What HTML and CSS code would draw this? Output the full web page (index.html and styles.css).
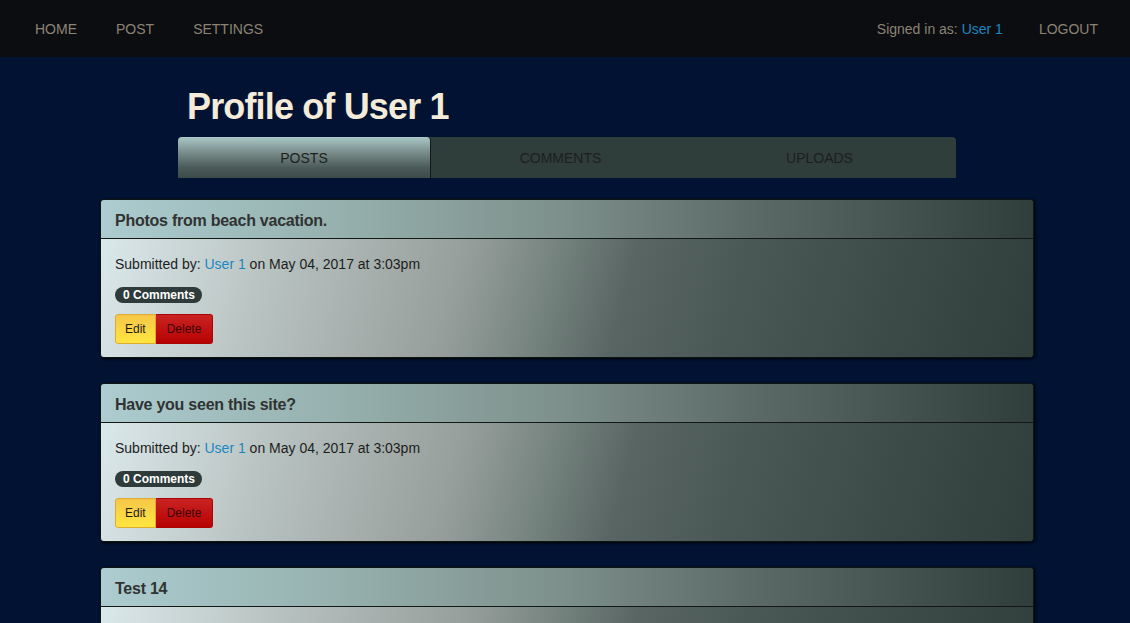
FILE: index.html
```html
<!DOCTYPE html>
<html>
<head>
<meta charset="utf-8">
<link rel="stylesheet" href="styles.css">
</head>
<body>
<nav class="navbar">
  <ul class="nav-left">
    <li><a href="#">HOME</a></li>
    <li><a href="#">POST</a></li>
    <li><a href="#">SETTINGS</a></li>
  </ul>
  <ul class="nav-right">
    <li class="signed">Signed in as: <a href="#" class="user-link">User 1</a></li>
    <li><a href="#">LOGOUT</a></li>
  </ul>
</nav>

<main class="page">
  <header class="profile-head">
    <h1 class="title">Profile of User 1</h1>
    <div class="tabs">
      <a href="#" class="tab active">POSTS</a>
      <a href="#" class="tab">COMMENTS</a>
      <a href="#" class="tab">UPLOADS</a>
    </div>
  </header>

  <section class="posts">
    <article class="panel">
      <div class="panel-heading">Photos from beach vacation.</div>
      <div class="panel-body">
        <p class="meta">Submitted by: <a href="#" class="user-link">User 1</a> on May 04, 2017 at 3:03pm</p>
        <div class="badge-row"><span class="badge">0 Comments</span></div>
        <div class="btn-group">
          <a href="#" class="btn btn-edit">Edit</a><a href="#" class="btn btn-delete">Delete</a>
        </div>
      </div>
    </article>

    <article class="panel">
      <div class="panel-heading">Have you seen this site?</div>
      <div class="panel-body">
        <p class="meta">Submitted by: <a href="#" class="user-link">User 1</a> on May 04, 2017 at 3:03pm</p>
        <div class="badge-row"><span class="badge">0 Comments</span></div>
        <div class="btn-group">
          <a href="#" class="btn btn-edit">Edit</a><a href="#" class="btn btn-delete">Delete</a>
        </div>
      </div>
    </article>

    <article class="panel">
      <div class="panel-heading">Test 14</div>
      <div class="panel-body">
        <p class="meta">Submitted by: <a href="#" class="user-link">User 1</a> on May 04, 2017 at 3:03pm</p>
        <div class="badge-row"><span class="badge">0 Comments</span></div>
        <div class="btn-group">
          <a href="#" class="btn btn-edit">Edit</a><a href="#" class="btn btn-delete">Delete</a>
        </div>
      </div>
    </article>
  </section>
</main>
</body>
</html>
```

FILE: styles.css
```css
* { box-sizing: border-box; }

html, body {
  margin: 0;
  padding: 0;
}

body {
  background: #011232;
  font-family: "Liberation Sans", Arial, Helvetica, sans-serif;
  font-size: 14px;
  line-height: 20px;
  color: #222;
  overflow: hidden;
}

a { text-decoration: none; }

.navbar {
  height: 57px;
  background: #0c0d11;
  display: flex;
  justify-content: space-between;
  align-items: center;
  padding: 0 12px 0 15px;
}

.nav-left, .nav-right {
  list-style: none;
  margin: 0;
  padding: 0;
  display: flex;
  align-items: center;
}

.nav-left li a {
  display: block;
  padding: 0 19px 0 20px;
  color: #8b8474;
  font-size: 14px;
  line-height: 18px;
}

.nav-right li a {
  color: #8b8474;
}

.nav-right li:last-child a {
  display: block;
  padding: 0 20px 0 36px;
}

.signed {
  color: #8b8474;
}

.nav-right .signed a.user-link,
.user-link {
  color: #1a87c0;
}

.page {
  padding-top: 28px;
  padding-left: 4px;
}

.profile-head {
  width: 778px;
  margin: 0 auto;
}

.title {
  margin: 0 0 8px 0;
  padding-left: 9px;
  font-size: 36px;
  line-height: 44px;
  font-weight: bold;
  letter-spacing: -0.85px;
  color: #f4ecd8;
}

.tabs {
  display: grid;
  grid-template-columns: 253px 1fr 1fr;
  padding-right: 7px;
  height: 41px;
  background: #2f3d3b;
  border-radius: 4px 4px 0 0;
}

.tab {
  display: flex;
  align-items: center;
  justify-content: center;
  color: #1d1f1e;
  font-size: 14px;
}

.tab.active {
  background: linear-gradient(to bottom, #a9c7c7 0%, #7d918f 35%, #4b5a58 75%, #3d4b49 100%);
  border-radius: 4px 4px 0 0;
  border-right: 1px solid #111a18;
}

.posts {
  width: 934px;
  margin: 21px auto 0;
  display: flex;
  flex-direction: column;
  gap: 25px;
}

.panel {
  border: 1px solid #0d1412;
  border-radius: 4px;
  overflow: hidden;
  box-shadow: 1px 1px 3px rgba(0, 0, 0, 0.9);
  background: #2f3d3b;
}

.panel-heading {
  height: 39px;
  padding: 4px 14px 0;
  display: flex;
  align-items: center;
  font-size: 16px;
  font-weight: bold;
  letter-spacing: -0.25px;
  color: #303332;
  background: linear-gradient(to right, #acccd0 0%, #96b1ae 25%, #7d8f8a 50%, #5b6a67 70%, #2f3d3b 100%);
  border-bottom: 1px solid #121816;
}

.panel-body {
  padding: 15px 14px 13px;
  background: linear-gradient(105deg, #dbe8ea 0%, #b5bfbd 20%, #979f9c 38%, #74827e 48%, #586562 56%, #4a5855 68%, #2f3d3b 100%);
}

.meta {
  margin: 0 0 11px 0;
  color: #1d1d1d;
}

.badge-row {
  height: 20px;
  display: flex;
  align-items: center;
}

.badge {
  display: inline-block;
  background: #2f3b3a;
  color: #fff;
  font-size: 12px;
  font-weight: bold;
  line-height: 12px;
  padding: 2px 7px 2px 8px;
  border-radius: 9px;
}

.btn-group {
  margin-top: 9px;
  display: flex;
}

.btn {
  display: block;
  font-size: 12px;
  line-height: 18px;
  padding: 5px 9px;
  border: 1px solid;
}

.btn-edit {
  color: #1d1a10;
  background: linear-gradient(to bottom, #f6c649, #ffe640);
  border-color: #e0a930;
  border-radius: 3px 0 0 3px;
}

.btn-delete {
  color: #3a0505;
  background: linear-gradient(to bottom, #c92323, #b80202);
  border-color: #a80606;
  border-left: none;
  padding: 5px 11px 5px 11px;
  border-radius: 0 3px 3px 0;
}
```
